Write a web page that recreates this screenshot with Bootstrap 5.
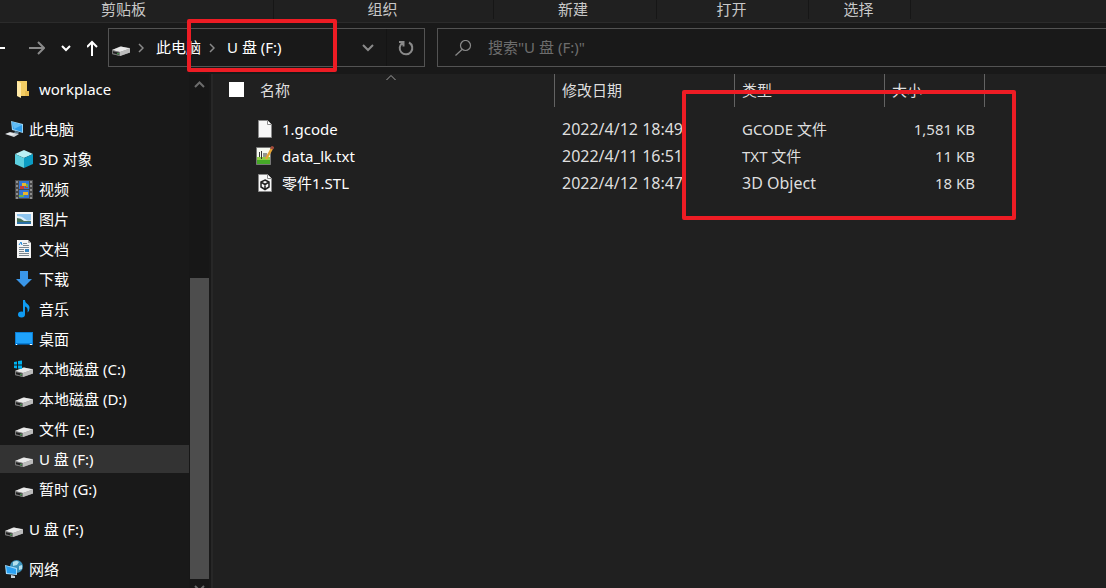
<!DOCTYPE html>
<html lang="zh-CN" data-bs-theme="dark">
<head>
<meta charset="utf-8">
<meta name="viewport" content="width=device-width, initial-scale=1">
<title>U 盘 (F:)</title>
<link href="https://cdn.jsdelivr.net/npm/bootstrap@5.3.0/dist/css/bootstrap.min.css" rel="stylesheet">
<style>
  body { font: 15px/20px "Noto Sans", "Noto Sans CJK SC", sans-serif; background: #191919; color: #fff; }
  svg { display: block; flex: none; }
  button { color: inherit; background: none; border: 0; padding: 0; }
  .wide-latin { font-size: 16px; }

  .ribbon { height: 23px; background: #202020; border-bottom: 1px solid #2b2b2b; color: #c8c8c8; }
  .ribbon-group { height: 19px; border-right: 1px solid #161616; text-align: center; line-height: 19px; }
  .g-clip { width: 274px; padding-right: 26px; }
  .g-org { width: 220px; padding-right: 2px; }
  .g-new { width: 163px; padding-right: 4px; }
  .g-open { width: 152px; padding-right: 2px; }
  .g-select { width: 102px; padding-right: 2px; }

  .toolbar { height: 51px; padding: 5px 0 6px; }
  .nav-btns { width: 108px; }
  .address { width: 317px; height: 39px; border: 1px solid #535353; padding-left: 3px; }
  .address a { color: #fff; text-decoration: none; padding-bottom: 2px; }
  .address .refresh { width: 38px; height: 37px; border-left: 1px solid #141414; }
  .search { height: 39px; margin-left: 12px; border: 1px solid #535353; border-right: 0; padding-left: 17px; }
  .search input { background: none; border: 0; outline: 0; color: #fff; padding: 0 0 2px; }
  .search input::placeholder { color: #6d6d6d; opacity: 1; }

  .marker { position: absolute; border: 4px solid #ed1c24; border-radius: 2px; pointer-events: none; }
  .marker-address { left: 78px; top: -10px; width: 150px; height: 53px; }
  .marker-table { left: 469px; top: 16px; width: 334px; height: 130px; }

  .side { width: 189px; }
  .side li { padding: 1px 0; }
  .side a { height: 28px; color: #fff; text-decoration: none; padding-left: 5px; gap: 6px; }
  .side .sub a { padding-left: 15px; }
  .side a.current { background: #333; }
  .side .gap-top { margin-top: 10px; }
  .scrollbar { width: 20px; background: #171717; padding-left: 1px; }
  .scroll-thumb { height: 301px; background: #4d4d4d; }
  .scroll-track { height: 187px; }

  .pane { margin-left: 2px; border-left: 2px solid #272727; background: #202020; }
  .files { width: 100%; table-layout: fixed; border-collapse: separate; border-spacing: 0; }
  .files th { height: 33px; font-weight: 400; padding: 0 0 2px 7px; border-right: 1px solid #636363; color: #dedede; }
  .files th:last-child { border: 0; }
  .files td { height: 27px; padding: 0 10px 0 7px; color: #dedede; white-space: nowrap; }
  .files th:first-child { padding-left: 16px; }
  .files td:first-child { padding-left: 43px; color: #fff; }
  .files tbody::before { content: ""; display: block; height: 8px; }
  .pick { appearance: none; width: 15px; height: 15px; background: #fff; margin: 0; }
  .sort { position: absolute; left: 173px; top: 0; }
</style>
</head>
<body class="vh-100 overflow-hidden d-flex flex-column">

<svg width="0" height="0" class="position-absolute" aria-hidden="true">
  <defs>
    <symbol id="drive" viewBox="0 0 18 18">
      <path d="M0 11 8 7.500 18 9v4.500L8 17 0 15z" fill="#8e8e8e"/>
      <path d="M0 11 9 7.500 18 9.500 8 13z" fill="#e9e9e9"/>
      <path d="M8 13l10-3.500v4L8 17z" fill="#bcbcbc"/>
      <path d="M0 11l8 2v4l-8-2z" fill="#777"/>
      <path d="M1 12.300l6 1.500v2l-6-1.500z" fill="#222"/>
      <path d="M5 14.300h2v1H5z" fill="#4fae5a"/>
    </symbol>
    <symbol id="chev-right" viewBox="0 0 6 10"><path d="M1 1l4 4-4 4" fill="none" stroke="#8a8a8a" stroke-width="1.500"/></symbol>
    <symbol id="page" viewBox="0 0 18 20">
      <path d="M2.500 1.500h9l4 4v13h-13z" fill="#f7f7f7" stroke="#8a8a8a"/>
      <path d="M11.500 1.500v4h4" fill="#fff" stroke="#8a8a8a"/>
    </symbol>
  </defs>
</svg>

<header>
  <div class="ribbon d-flex">
    <div class="ribbon-group g-clip">剪贴板</div>
    <div class="ribbon-group g-org">组织</div>
    <div class="ribbon-group g-new">新建</div>
    <div class="ribbon-group g-open">打开</div>
    <div class="ribbon-group g-select">选择</div>
  </div>
  <div class="toolbar d-flex">
    <div class="nav-btns d-flex align-items-center flex-shrink-0">
      <button type="button" aria-label="后退"><svg width="5" height="16"><path d="M0 8h5" stroke="#fff" stroke-width="2"/></svg></button>
      <button type="button" class="ms-4" aria-label="前进"><svg width="16" height="14" fill="none" stroke="#8a8a8a" stroke-width="2"><path d="M0 7h15M9 1l6 6-6 6"/></svg></button>
      <button type="button" class="ms-3" aria-label="最近位置"><svg width="10" height="8" fill="none" stroke="#fff" stroke-width="2"><path d="M1 2l4 4 4-4"/></svg></button>
      <button type="button" class="ms-3" aria-label="上移"><svg width="12" height="16" fill="none" stroke="#fff" stroke-width="2"><path d="M5 16V2M0 7l5-5 5 5"/></svg></button>
    </div>
    <nav class="address position-relative d-flex align-items-center flex-shrink-0" aria-label="地址">
      <svg width="18" height="18"><use href="#drive"/></svg>
      <svg width="6" height="10" class="mx-2"><use href="#chev-right"/></svg>
      <a href="#" class="ms-1">此电脑</a>
      <svg width="6" height="10" class="ms-2 me-2"><use href="#chev-right"/></svg>
      <a href="#" class="ms-1">U 盘 (F:)</a>
      <button type="button" class="ms-auto me-1 px-1" aria-label="展开"><svg width="12" height="9" fill="none" stroke="#8a8a8a" stroke-width="2"><path d="M1 2l5 5 5-5"/></svg></button>
      <button type="button" class="refresh ms-1 d-flex align-items-center justify-content-center" aria-label="刷新"><svg width="16" height="16" fill="none" stroke="#8a8a8a" stroke-width="2"><path d="M11 2.500A6.300 6.300 0 1 1 4.500 2.800M1 2h4.500v4.500"/></svg></button>
      <div class="marker marker-address"></div>
    </nav>
    <div class="search d-flex align-items-center flex-grow-1">
      <svg width="17" height="16" fill="none" stroke="#8a8a8a" stroke-width="1.200"><circle cx="10.500" cy="5.500" r="5"/><path d="M7 9.500L.500 15.500"/></svg>
      <input type="text" class="flex-grow-1 ms-3" aria-label="搜索" placeholder='搜索"U 盘 (F:)"'>
    </div>
  </div>
</header>

<div class="d-flex flex-grow-1 overflow-hidden">
  <nav class="side flex-shrink-0" aria-label="导航窗格">
    <ul class="list-unstyled sub mb-0">
      <li><a href="#" class="d-flex align-items-center"><svg width="18" height="18"><path d="M2 1h10v15H2z" fill="#f3cd64"/><path d="M10 11h4v5h-4z" fill="#e9bd50"/><path d="M2 1l4 2v15l-4-2z" fill="#ffe9a6"/></svg>workplace</a></li>
    </ul>
    <ul class="list-unstyled mb-0 gap-top">
      <li><a href="#" class="d-flex align-items-center"><svg width="18" height="18"><path d="M6 1l12 3v9L7 10z" fill="#9ad4f5"/><path d="M7 2l10 3v7L8 9z" fill="#2d9cea"/><path d="M7 2l10 3-8 4z" fill="#60bdf6"/><path d="M10 11l4 1-1 2-4-1z" fill="#5c7e91"/><path d="M0 14l5-2 9 2-5 3z" fill="#cfd4d8"/><path d="M1 14l4-1 5 1-3 1z" fill="#eef0f2"/></svg>此电脑</a></li>
    </ul>
    <ul class="list-unstyled sub mb-0">
      <li><a href="#" class="d-flex align-items-center"><svg width="18" height="18"><path d="M0 4l9-4 9 4-9 4z" fill="#b9f1f5"/><path d="M0 4l9 4v10l-9-4z" fill="#5ccfdf"/><path d="M18 4L9 8v10l9-4z" fill="#0b9cc4"/></svg>3D 对象</a></li>
      <li><a href="#" class="d-flex align-items-center"><svg width="18" height="19"><path d="M0 0h18v19H0z" fill="#4a4a4a"/><path d="M4 1h10v8H4zM4 10h10v8H4z" fill="#3476d5"/><path d="M7 3h4v3H7zM8 12h5v3H8z" fill="#e8b62e"/><path d="M5 6h4v3H5zM10 6h3v2h-3z" fill="#c93b38"/><path d="M4 15h5v2H4zM11 4h2v3h-2z" fill="#6bb34c"/><path d="M2 1v18M16 1v18" stroke="#8f8f8f" stroke-width="2" stroke-dasharray="2 2"/></svg>视频</a></li>
      <li><a href="#" class="d-flex align-items-center"><svg width="18" height="14"><path d="M0 0h18v14H0z" fill="#f5f5f5"/><path d="M2 2h14v10H2z" fill="#8ec5ef"/><path d="M2 4q5 0 8 3t6 1v4H2z" fill="#e0effa"/><path d="M2 6q4 0 7 3h7v3H2z" fill="#47735c"/><path d="M2 10h14v2H2z" fill="#2a70a8"/></svg>图片</a></li>
      <li><a href="#" class="d-flex align-items-center"><svg width="18" height="18"><path d="M2 0h11l3 3v15H2z" fill="#f4f4f4"/><path d="M13 0v3h3z" fill="#aaa"/><path d="M4 5l2-3 1 3" stroke="#1a86d9" fill="none"/><path d="M8 3.500h4M8 5.500h6M4 7.500h10M4 9.500h5M4 11.500h5M4 13.500h10M4 15.500h10" stroke="#7b8790"/><path d="M10 9h4v3h-4z" fill="#3483bf"/></svg>文档</a></li>
      <li><a href="#" class="d-flex align-items-center"><svg width="18" height="18"><path d="M5 1h8v8h4l-8 8-8-8h4z" fill="#3a96e8"/></svg>下载</a></li>
      <li><a href="#" class="d-flex align-items-center"><svg width="18" height="18"><ellipse cx="6.500" cy="14.500" rx="3.500" ry="3" fill="#0f9bf2"/><path d="M8 0h2c0 4 5 4 4.500 8q0 3-2 4.500 1-5-2.500-6v8H8z" fill="#0f9bf2"/></svg>音乐</a></li>
      <li><a href="#" class="d-flex align-items-center"><svg width="18" height="14"><path d="M0 0h18v13H0z" fill="#0a7fd6"/><path d="M1 1h16v10H1z" fill="#1fa2fb"/><path d="M1 12.500h1m13 0h2" stroke="#fff"/><path d="M3 12.500h11" stroke="#064e88"/></svg>桌面</a></li>
      <li><a href="#" class="d-flex align-items-center"><svg width="18" height="18" overflow="visible"><use href="#drive" width="18" height="18"/><path d="M-1 2l3-.500v3h-3zM3 1l4-.500v4H3zM-1 5.500h3v3l-3-.500zM3 5.500h4v3.500l-4-.500z" fill="#00b2f0"/></svg>本地磁盘 (C:)</a></li>
      <li><a href="#" class="d-flex align-items-center"><svg width="18" height="18"><use href="#drive"/></svg>本地磁盘 (D:)</a></li>
      <li><a href="#" class="d-flex align-items-center"><svg width="18" height="18"><use href="#drive"/></svg>文件 (E:)</a></li>
      <li><a href="#" class="d-flex align-items-center current"><svg width="18" height="18"><use href="#drive"/></svg>U 盘 (F:)</a></li>
      <li><a href="#" class="d-flex align-items-center"><svg width="18" height="18"><use href="#drive"/></svg>暂时 (G:)</a></li>
    </ul>
    <ul class="list-unstyled mb-0 gap-top">
      <li><a href="#" class="d-flex align-items-center"><svg width="18" height="18"><use href="#drive"/></svg>U 盘 (F:)</a></li>
      <li class="gap-top"><a href="#" class="d-flex align-items-center"><svg width="18" height="18"><circle cx="11.500" cy="6.500" r="6.500" fill="#3d93bb"/><path d="M8 2q4-2 6 0l-2 3-4 1zM14 6l3-1v4l-3 1z" fill="#b3e0ee"/><path d="M0 5l12 3v7L1 14z" fill="#a4dcfb"/><path d="M1 6l10 3v5L2 13z" fill="#2aa1f3"/><path d="M6 15l4 1v2H6z" fill="#c8d3da"/></svg>网络</a></li>
    </ul>
  </nav>
  <div class="scrollbar flex-shrink-0 d-flex flex-column" aria-hidden="true">
    <svg width="19" height="17" fill="none" stroke="#6c6c6c" stroke-width="2"><path d="M5 13l4.500-4.500L14 13"/></svg>
    <div class="scroll-track flex-shrink-0"></div>
    <div class="scroll-thumb flex-shrink-0"></div>
    <svg width="19" height="17" fill="none" stroke="#6c6c6c" stroke-width="2"><path d="M5 7l4.500 4.500L14 7"/></svg>
  </div>

  <main class="pane position-relative flex-grow-1 overflow-hidden">
    <table class="files">
      <colgroup><col style="width:342px"><col style="width:180px"><col style="width:150px"><col style="width:100px"><col></colgroup>
      <thead>
        <tr>
          <th scope="col"><span class="d-flex align-items-center"><input type="checkbox" class="pick" id="pick-all" aria-label="全选"><span class="ms-3">名称</span></span></th>
          <th scope="col">修改日期</th><th scope="col">类型</th><th scope="col">大小</th><th></th>
        </tr>
      </thead>
      <tbody>
        <tr>
          <td><span class="d-flex align-items-center gap-2"><svg width="18" height="20"><use href="#page"/></svg>1.gcode</span></td>
          <td class="wide-latin">2022/4/12 18:49</td><td>GCODE 文件</td><td class="text-end">1,581 KB</td><td></td>
        </tr>
        <tr>
          <td><span class="d-flex align-items-center gap-2"><svg width="18" height="20"><path d="M.500 1.500h14v17H.500z" fill="#f6f9f0" stroke="#777"/><path d="M1 11h13v7H1z" fill="#8fce45"/><path d="M1 14h13v4H1z" fill="#45a827"/><path d="M3.500 6v5M5.500 5v8M8 7v4M10 7v4" stroke="#333"/><path d="M10 13L16.500 1.500" stroke="#e5a333" stroke-width="2.500"/><path d="M15.500 3l1.500-2.500" stroke="#a34b3c" stroke-width="3"/></svg>data_lk.txt</span></td>
          <td class="wide-latin">2022/4/11 16:51</td><td>TXT 文件</td><td class="text-end">11 KB</td><td></td>
        </tr>
        <tr>
          <td><span class="d-flex align-items-center gap-2"><svg width="18" height="20"><use href="#page"/><path d="M9 7l4 2v5l-4 2.500L5 14V9zM5 9l4 2.500L13 9M9 11.500v5" fill="none" stroke="#222" stroke-width="1.500"/></svg>零件1.STL</span></td>
          <td class="wide-latin">2022/4/12 18:47</td><td class="wide-latin">3D Object</td><td class="text-end">18 KB</td><td></td>
        </tr>
      </tbody>
    </table>
    <svg class="sort" width="10" height="7" fill="none" stroke="#a0a0a0"><path d="M.500 6L5 1.500 9.500 6"/></svg>
    <div class="marker marker-table"></div>
  </main>
</div>
<script src="https://cdn.jsdelivr.net/npm/bootstrap@5.3.0/dist/js/bootstrap.bundle.min.js"></script>
</body>
</html>
